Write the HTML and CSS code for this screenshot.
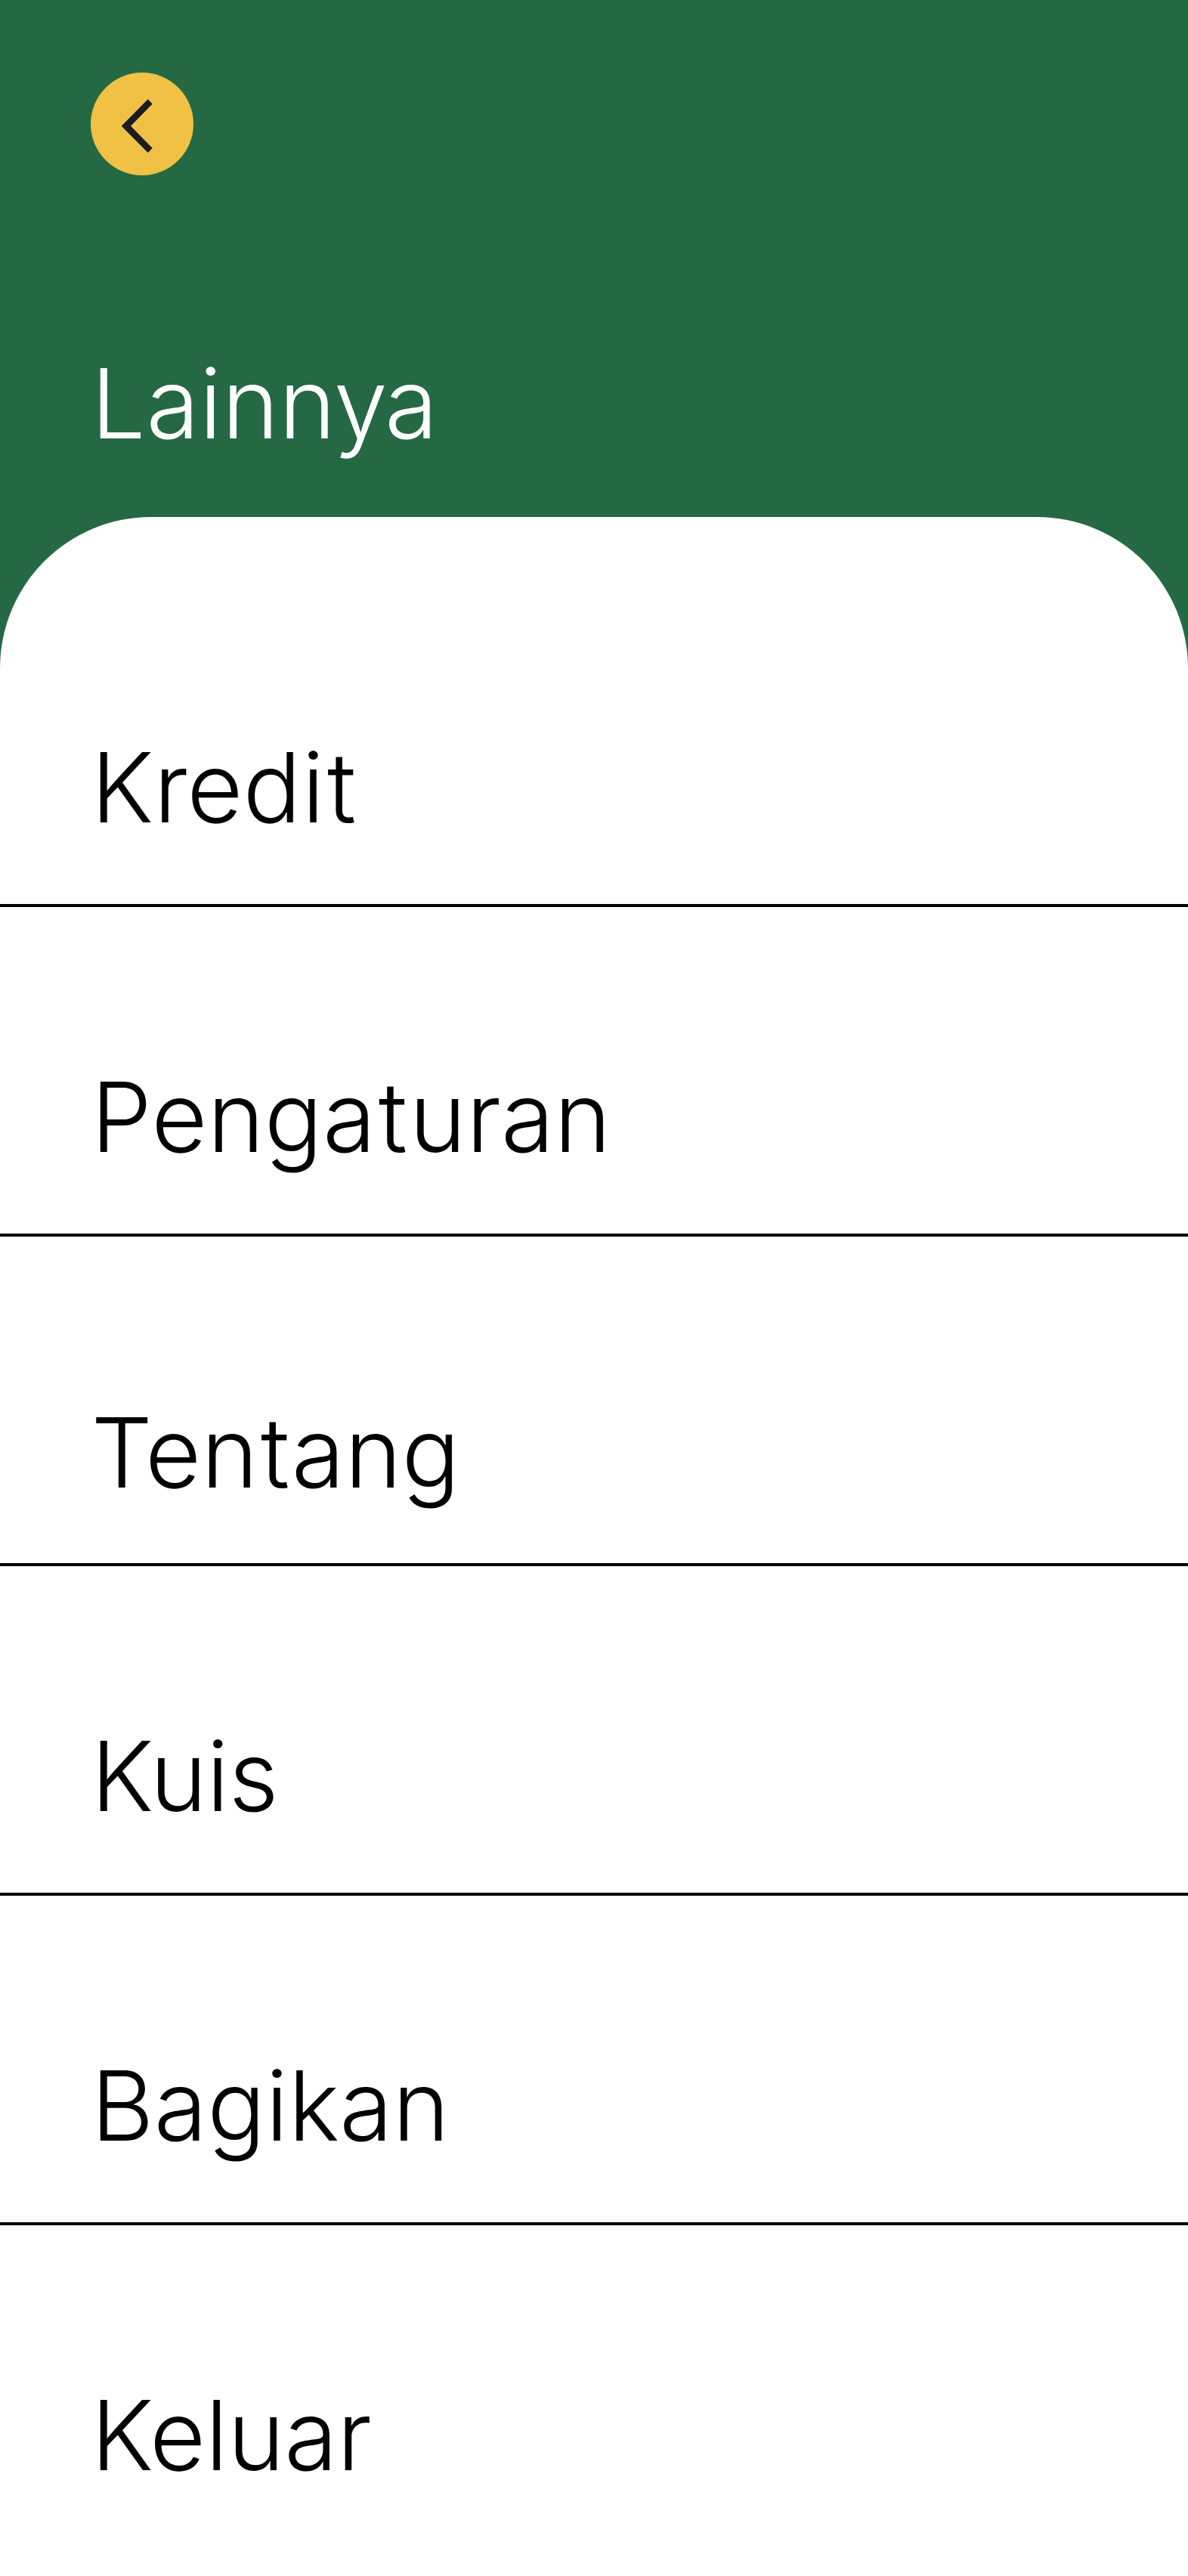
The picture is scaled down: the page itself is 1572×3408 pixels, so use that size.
FILE: index.html
```html
<!DOCTYPE html>
<html lang="id">
<head>
<meta charset="utf-8">
<title>Lainnya</title>
<link rel="stylesheet" href="styles.css">
</head>
<body>
<header class="header">
  <button class="back" aria-label="Kembali">
    <svg class="back-icon" viewBox="0 0 136 136"><path d="M75.7 35.3 81.7 41.4 53 70.7 81.7 100 75.7 106.1 40.7 70.7Z" fill="#1d1b20"/></svg>
  </button>
  <h1 class="title">L<span class="glyph-a">a</span>inn<span class="glyph-y">y</span>a</h1>
</header>
<main class="sheet">
  <nav class="menu">
    <a class="item first">Kred<span class="glyph-i">i</span><span class="glyph-t">t</span></a>
    <a class="item">Penga<span class="glyph-t">t</span>uran</a>
    <a class="item lower">Ten<span class="glyph-t">t</span>ang</a>
    <a class="item tight">Kuis</a>
    <a class="item loose">Bagikan</a>
    <a class="item snug last">Keluar</a>
  </nav>
</main>
</body>
</html>
```

FILE: styles.css
```css
* { box-sizing: border-box; }
body {
  margin: 0;
  height: 3408px;
  background: #246944;
  font-family: Inter, sans-serif;
  font-weight: 300;
  display: flex;
  flex-direction: column;
}

.header {
  height: 684px;
  padding: 96px 120px 0;
}
.back {
  display: block;
  width: 136px;
  height: 136px;
  padding: 0;
  border: 0;
  border-radius: 50%;
  background: #f0c145;
}
.back-icon { display: block; width: 136px; height: 136px; }
.title {
  margin: 224px 0 0;
  padding-left: 0.6px;
  color: #fff;
  font-size: 128px;
  line-height: 155px;
  font-weight: 300;
}

.sheet {
  flex: 1;
  background: #fff;
  border-radius: 200px 200px 0 0;
}
.menu { display: flex; flex-direction: column; }
.item {
  display: block;
  height: 436px;
  padding: 200px 120px 0 120.6px;
  border-bottom: 4px solid #000;
  color: #000;
  font-size: 128px;
  line-height: 155px;
}
.first { height: 516px; padding-top: 280px; }
.lower { padding-top: 208px; }
.last { border-bottom: 0; }

/* optical spacing corrections */
.glyph-a { margin-left: 0.6px; }
.glyph-i { margin-left: 1px; }
.glyph-t { margin: 0 2.6px 0 3.6px; }
.glyph-y { margin: 0 -3.8px 0 -2.6px; }
.tight { letter-spacing: -0.6px; }
.snug { letter-spacing: -0.4px; }
.loose { letter-spacing: 0.1px; }
```
